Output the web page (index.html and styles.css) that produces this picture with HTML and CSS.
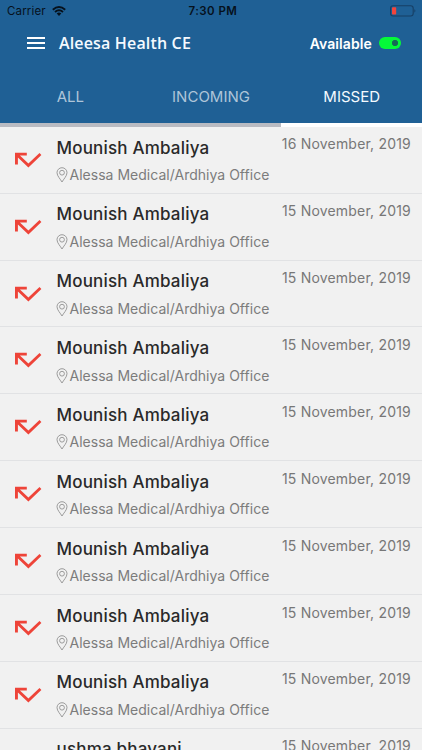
FILE: index.html
```
<!DOCTYPE html>
<html lang="en">
<head>
<meta charset="utf-8">
<title>Aleesa Health CE</title>
<link rel="stylesheet" href="styles.css">
</head>
<body>
<svg class="sprite" aria-hidden="true">
  <symbol id="missed" viewBox="0 0 28 17"><path d="M1 .7H12.800V3.500H5.900L14.400 11.600L25.500 1L27.400 2.900L14.400 15.500L3.900 5.500V12.500H1Z" fill="#ee4439"/></symbol>
  <symbol id="pin" viewBox="0 0 12 16"><path d="M6 15C4.500 12.200 1 9 1 5.700A5 5 0 0 1 11 5.700C11 9 7.500 12.200 6 15Z" fill="none" stroke="#929292" stroke-width=".9"/><circle cx="6" cy="5.700" r="2.400" fill="none" stroke="#929292" stroke-width=".9"/></symbol>
</svg>
<header class="header">
  <div class="status">
    <div class="carrier"><span class="carrier-name">Carrier</span>
      <svg class="wifi" viewBox="0 0 14 10"><path d="M.8 3.700Q7-1.700 13.200 3.700M3 6Q7 2.600 11 6" fill="none" stroke="#06111c" stroke-width="1.900"/><path d="M4.700 7.500Q7 5.700 9.300 7.500L7 9.900Z" fill="#06111c"/></svg>
    </div>
    <span class="clock">7:30 PM</span>
    <svg class="battery" viewBox="0 0 26 12"><rect x=".6" y=".7" width="22.600" height="10.300" rx="2.500" fill="none" stroke="#173f65" stroke-width="1.100"/><rect x="2" y="2.200" width="4.200" height="7.300" rx=".7" fill="#f4443b"/><path d="M24.400 4Q26.300 5.800 24.400 7.800Z" fill="#173f65"/></svg>
  </div>
  <div class="bar">
    <div class="menu"><i></i><i></i><i></i></div>
    <h1 class="title">Aleesa Health CE</h1>
    <span class="available">Available</span>
    <span class="toggle"></span>
  </div>
  <nav class="tabs">
    <div class="tab"><span>ALL</span></div>
    <div class="tab"><span class="incoming">INCOMING</span></div>
    <div class="tab active"><span class="missed">MISSED</span></div>
  </nav>
</header>
<main class="list">
  <article class="row"><svg class="call"><use href="#missed"/></svg><div class="info"><div class="name">Mounish Ambaliya</div><div class="place"><svg class="pin"><use href="#pin"/></svg><span class="office">Alessa Medical/Ardhiya Office</span></div></div><time class="date">16 November, 2019</time></article>
  <article class="row"><svg class="call"><use href="#missed"/></svg><div class="info"><div class="name">Mounish Ambaliya</div><div class="place"><svg class="pin"><use href="#pin"/></svg><span class="office">Alessa Medical/Ardhiya Office</span></div></div><time class="date">15 November, 2019</time></article>
  <article class="row"><svg class="call"><use href="#missed"/></svg><div class="info"><div class="name">Mounish Ambaliya</div><div class="place"><svg class="pin"><use href="#pin"/></svg><span class="office">Alessa Medical/Ardhiya Office</span></div></div><time class="date">15 November, 2019</time></article>
  <article class="row"><svg class="call"><use href="#missed"/></svg><div class="info"><div class="name">Mounish Ambaliya</div><div class="place"><svg class="pin"><use href="#pin"/></svg><span class="office">Alessa Medical/Ardhiya Office</span></div></div><time class="date">15 November, 2019</time></article>
  <article class="row"><svg class="call"><use href="#missed"/></svg><div class="info"><div class="name">Mounish Ambaliya</div><div class="place"><svg class="pin"><use href="#pin"/></svg><span class="office">Alessa Medical/Ardhiya Office</span></div></div><time class="date">15 November, 2019</time></article>
  <article class="row"><svg class="call"><use href="#missed"/></svg><div class="info"><div class="name">Mounish Ambaliya</div><div class="place"><svg class="pin"><use href="#pin"/></svg><span class="office">Alessa Medical/Ardhiya Office</span></div></div><time class="date">15 November, 2019</time></article>
  <article class="row"><svg class="call"><use href="#missed"/></svg><div class="info"><div class="name">Mounish Ambaliya</div><div class="place"><svg class="pin"><use href="#pin"/></svg><span class="office">Alessa Medical/Ardhiya Office</span></div></div><time class="date">15 November, 2019</time></article>
  <article class="row"><svg class="call"><use href="#missed"/></svg><div class="info"><div class="name">Mounish Ambaliya</div><div class="place"><svg class="pin"><use href="#pin"/></svg><span class="office">Alessa Medical/Ardhiya Office</span></div></div><time class="date">15 November, 2019</time></article>
  <article class="row"><svg class="call"><use href="#missed"/></svg><div class="info"><div class="name">Mounish Ambaliya</div><div class="place"><svg class="pin"><use href="#pin"/></svg><span class="office">Alessa Medical/Ardhiya Office</span></div></div><time class="date">15 November, 2019</time></article>
  <article class="row"><div class="call"></div><div class="info"><div class="name">ushma bhavani</div></div><time class="date">15 November, 2019</time></article>
</main>
</body>
</html>
```
FILE: styles.css
```
* { box-sizing: border-box; }
body {
  margin: 0;
  height: 750px;
  overflow: hidden;
  display: flex;
  flex-direction: column;
  background: #f1f1f1;
  font-family: Inter, "Liberation Sans", sans-serif;
  white-space: nowrap;
}
svg { display: block; flex: none; }
.sprite { display: none; }
.header { flex: none; background: #1f6095; }
.status {
  height: 22px;
  padding: 0 6px 0 10px;
  display: grid;
  grid-template-columns: 1fr auto 1fr;
  align-items: center;
  color: #06111c;
}
.carrier { display: flex; align-items: center; gap: 6px; margin-left: -3px; font-size: 11.5px; letter-spacing: .15px; }
.wifi { width: 14px; height: 10px; }
.clock { font-size: 11.5px; font-weight: 600; letter-spacing: .45px; }
.battery { width: 26px; height: 12px; justify-self: end; }
.bar { height: 42px; padding: 0 21px 0 27px; display: flex; align-items: center; }
.menu { width: 18px; height: 12px; display: flex; flex-direction: column; justify-content: space-between; }
.menu i { height: 2px; background: #fff; }
.title { margin: 0 auto 0 14px; font: 600 16px/24px "Open Sans", sans-serif; letter-spacing: .16px; color: #f5faff; }
.available { font-size: 14px; font-weight: 600; letter-spacing: .1px; color: #fff; }
.toggle { width: 22px; height: 12px; margin-left: 7px; border-radius: 6px; background: radial-gradient(circle at 16px 6px, #166956 2.8px, #05fa38 3.4px); }
.tabs { display: flex; height: 62.8px; }
.tab {
  flex: 1;
  display: flex;
  justify-content: center;
  align-items: center;
  padding-top: 6px;
  border-bottom: 4px solid #b9bbc2;
  font-size: 15px;
  color: #aec5d9;
}
.active { color: #f4faff; border-color: #fff; }
.list { flex: 1; min-height: 0; overflow: hidden; }
.row { height: 66.86px; padding: 0 11px 0 14px; display: flex; border-bottom: 1px solid #e1e2e4; }
.call { width: 28px; height: 17px; margin-top: 25px; }
.info { margin: 9.8px auto 0 14.5px; }
.name { font-size: 17px; line-height: 22px; font-weight: 500; letter-spacing: .19px; color: #292929; }
.place { display: flex; align-items: center; height: 20px; margin-top: 6.4px; }
.pin { width: 12px; height: 16px; margin: 0 1.3px 0 -.3px; }
.office { font-size: 14px; line-height: 20px; letter-spacing: .02px; color: #7c7c7c; }
.date { margin-top: 7.7px; font-size: 14px; line-height: 20px; letter-spacing: .2px; color: #777; }
```
